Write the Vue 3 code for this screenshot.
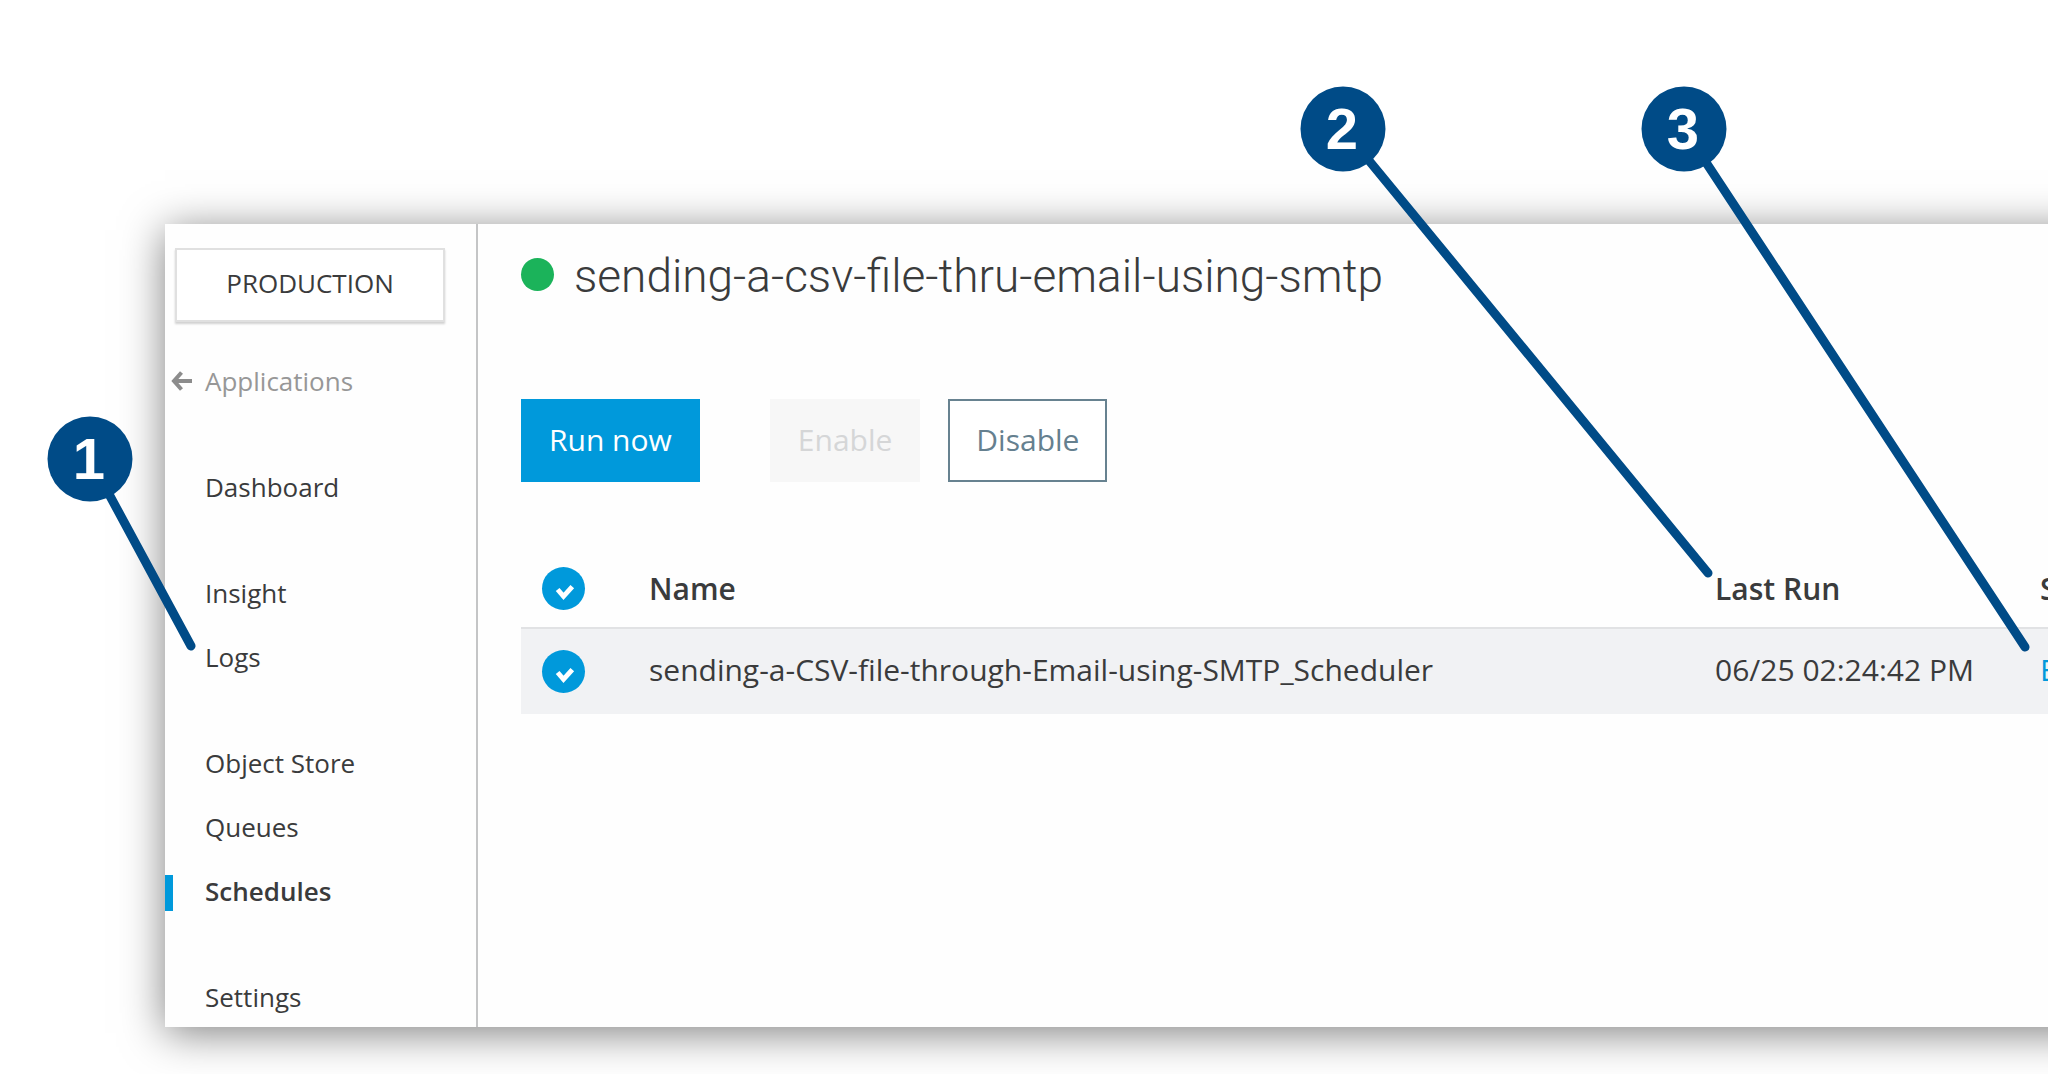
<script setup>
import { ref } from 'vue'

const navGroups = [
  ['Dashboard'],
  ['Insight', 'Logs'],
  ['Object Store', 'Queues', 'Schedules'],
  ['Settings'],
]
const current = 'Schedules'

const allSelected = ref(true)
const schedules = ref([
  {
    name: 'sending-a-CSV-file-through-Email-using-SMTP_Scheduler',
    lastRun: '06/25 02:24:42 PM',
    state: 'Enabled',
    selected: true,
  },
])

const callouts = [
  { label: '1', x: 90, y: 459, toX: 191, toY: 646 },
  { label: '2', x: 1343, y: 129, toX: 1708, toY: 573 },
  { label: '3', x: 1684, y: 129, toX: 2025, toY: 647 },
]
</script>

<template>
  <div class="page">
    <div class="panel">
      <aside class="sidebar">
        <button class="environment" type="button">PRODUCTION</button>
        <nav class="nav">
          <a class="nav-item back" href="#applications">
            <svg class="arrow" width="22" height="20" viewBox="0 0 22 20" aria-hidden="true">
              <path d="M10.500 1.500 3 10l7.500 8.500M3 10h18" />
            </svg>
            Applications
          </a>
          <ul v-for="(group, i) in navGroups" :key="i" class="nav-group">
            <li v-for="item in group" :key="item">
              <a class="nav-item" :class="{ active: item === current }" href="#">{{ item }}</a>
            </li>
          </ul>
        </nav>
      </aside>

      <main class="content">
        <header class="title-row">
          <span class="status-dot"></span>
          <h1 class="title">sending-a-csv-file-thru-email-using-smtp</h1>
        </header>

        <div class="actions">
          <button class="btn primary" type="button">Run now</button>
          <div class="toggle-actions">
            <button class="btn muted" type="button" disabled>Enable</button>
            <button class="btn outline" type="button">Disable</button>
          </div>
        </div>

        <table class="schedules">
          <thead>
            <tr>
              <th class="col-check">
                <label class="check">
                  <input v-model="allSelected" type="checkbox" aria-label="Select all schedules" />
                  <svg viewBox="-22 -22 44 44" aria-hidden="true"><path d="M-6 1 0 8 9-2" /></svg>
                </label>
              </th>
              <th class="col-name">Name</th>
              <th class="col-run">Last Run</th>
              <th class="col-state">State</th>
            </tr>
          </thead>
          <tbody>
            <tr v-for="row in schedules" :key="row.name">
              <td>
                <label class="check">
                  <input v-model="row.selected" type="checkbox" :aria-label="'Select ' + row.name" />
                  <svg viewBox="-22 -22 44 44" aria-hidden="true"><path d="M-6 1 0 8 9-2" /></svg>
                </label>
              </td>
              <td class="text">{{ row.name }}</td>
              <td class="text">{{ row.lastRun }}</td>
              <td class="text"><a class="state-link" href="#">{{ row.state }}</a></td>
            </tr>
          </tbody>
        </table>
      </main>
    </div>

    <svg class="callouts">
      <g v-for="c in callouts" :key="c.label">
        <line :x1="c.x" :y1="c.y" :x2="c.toX" :y2="c.toY" />
        <circle :cx="c.x" :cy="c.y" r="42.500" />
        <text :x="c.x - 1" :y="c.y + 20">{{ c.label }}</text>
      </g>
    </svg>
  </div>
</template>

<style>
body {
  margin: 0;
  background: #fff;
}
</style>

<style scoped>
.page {
  position: relative;
  box-sizing: border-box;
  min-height: 100vh;
  padding: 224px 0 47px 165px;
  overflow: hidden;
  color: #3a3b3c;
  font-family: "Open Sans", "Noto Sans", sans-serif;
  font-size: 30px;
}

/* The panel runs on past the right edge of the window. */
.panel {
  display: flex;
  margin-right: -80px;
  background: #fefefe;
  box-shadow: 0 6px 40px rgba(0, 0, 0, 0.5);
}

.sidebar {
  flex: none;
  box-sizing: border-box;
  width: 313px;
  padding: 24px 0 10px;
  border-right: 2px solid #c4c5c6;
  font-size: 26px;
}

.environment {
  display: block;
  box-sizing: border-box;
  width: 270px;
  height: 74px;
  margin-left: 10px;
  padding: 0 0 4px;
  border: 2px solid #e0e0e0;
  background: #fff;
  box-shadow: 0 2px 2px rgba(0, 0, 0, 0.18);
  color: inherit;
  font: inherit;
}

.nav {
  display: flex;
  flex-direction: column;
  gap: 70px;
  margin-top: 43px;
}

.nav-group {
  display: flex;
  flex-direction: column;
  gap: 28px;
  margin: 0;
  padding: 0;
  list-style: none;
}

.nav-item {
  display: block;
  box-sizing: border-box;
  height: 36px;
  padding-left: 40px;
  color: inherit;
  line-height: 32px;
  text-decoration: none;
}

.nav-item.active {
  padding-left: 32px;
  border-left: 8px solid #0099db;
  font-weight: 600;
}

.nav-item.back {
  display: flex;
  gap: 12px;
  padding-left: 6px;
  color: #979797;
}

.arrow {
  margin-top: 6px;
  fill: none;
  stroke: #8c8c8c;
  stroke-width: 4;
}

.content {
  flex: 1;
  min-width: 0;
  padding: 24px 0 0 43px;
}

.title-row {
  display: flex;
  gap: 20px;
  align-items: center;
  height: 56px;
}

.status-dot {
  width: 33px;
  height: 33px;
  margin-bottom: 4px;
  border-radius: 50%;
  background: #1bb35a;
}

.title {
  margin: 0;
  font-family: Roboto, "Open Sans", sans-serif;
  font-size: 46px;
  font-weight: 300;
  line-height: 56px;
  white-space: nowrap;
}

.actions,
.toggle-actions {
  display: flex;
}

.actions {
  gap: 70px;
  margin-top: 95px;
}

.toggle-actions {
  gap: 28px;
}

.btn {
  box-sizing: border-box;
  height: 83px;
  padding: 0 26px 2px;
  border: 2px solid transparent;
  font: inherit;
}

.btn.primary {
  border-color: #0099db;
  background: #0099db;
  color: #fff;
}

.btn.muted {
  border-color: #f7f7f7;
  background: #f7f7f7;
  color: #d5d6d7;
}

.btn.outline {
  border-color: #678290;
  background: #fff;
  color: #65808f;
}

.schedules {
  width: 100%;
  margin-top: 67px;
  border-collapse: collapse;
  table-layout: fixed;
  text-align: left;
  white-space: nowrap;
}

.schedules th,
.schedules td {
  box-sizing: border-box;
  padding: 0;
}

.schedules th {
  height: 79px;
  border-bottom: 2px solid #e1e2e4;
  font-weight: 600;
}

.schedules td {
  height: 86px;
  background: #f1f2f4;
}

.schedules td.text {
  padding-bottom: 4px;
}

.col-check {
  width: 128px;
}

.col-run {
  width: 325px;
}

.col-state {
  width: 88px;
}

.state-link {
  color: #0099db;
  text-decoration: none;
}

.check {
  display: grid;
  width: 43px;
  height: 43px;
  margin-left: 21px;
}

.check input,
.check svg {
  grid-area: 1 / 1;
  width: 43px;
  height: 43px;
  margin: 0;
}

.check input {
  appearance: none;
  border-radius: 50%;
  background: #0099db;
}

.check svg {
  fill: none;
  stroke: #fff;
  stroke-width: 5;
  pointer-events: none;
}

.callouts {
  position: absolute;
  top: 0;
  left: 0;
  width: 100%;
  height: 100%;
  pointer-events: none;
}

.callouts line {
  stroke: #004b87;
  stroke-linecap: round;
  stroke-width: 9;
}

.callouts circle {
  fill: #004b87;
}

.callouts text {
  fill: #fff;
  font-family: "Liberation Sans", Arial, sans-serif;
  font-size: 58px;
  font-weight: 700;
  text-anchor: middle;
}
</style>
